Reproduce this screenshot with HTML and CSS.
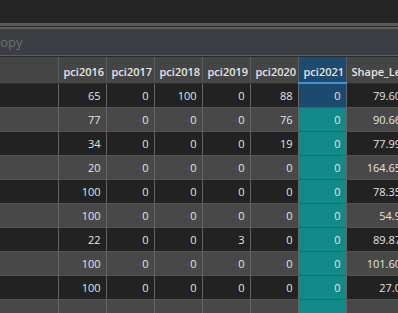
FILE: index.html
```html
<html>

<head>
    <link rel="stylesheet" href="styles.css">
</head>

<body>
    <div class="toolbar"></div>
    <div class="rule"></div>
    <div class="search-bar">
        <span class="placeholder">Copy</span>
    </div>

    <table class="attr-table">
        <colgroup>
            <col class="col-row">
            <col class="col-num"><col class="col-num"><col class="col-num">
            <col class="col-num"><col class="col-num"><col class="col-num">
            <col class="col-shape">
        </colgroup>
        <thead>
            <tr>
                <th></th>
                <th>pci2016</th>
                <th>pci2017</th>
                <th>pci2018</th>
                <th>pci2019</th>
                <th>pci2020</th>
                <th class="sel-head">pci2021</th>
                <th>Shape_Length</th>
            </tr>
        </thead>
        <tbody>
            <tr><td></td><td>65</td><td>0</td><td>100</td><td>0</td><td>88</td><td class="sel active">0</td><td>79.60</td></tr>
            <tr><td></td><td>77</td><td>0</td><td>0</td><td>0</td><td>76</td><td class="sel">0</td><td>90.66</td></tr>
            <tr><td></td><td>34</td><td>0</td><td>0</td><td>0</td><td>19</td><td class="sel">0</td><td>77.99</td></tr>
            <tr><td></td><td>20</td><td>0</td><td>0</td><td>0</td><td>0</td><td class="sel">0</td><td>164.65</td></tr>
            <tr><td></td><td>100</td><td>0</td><td>0</td><td>0</td><td>0</td><td class="sel">0</td><td>78.35</td></tr>
            <tr><td></td><td>100</td><td>0</td><td>0</td><td>0</td><td>0</td><td class="sel">0</td><td>54.9</td></tr>
            <tr><td></td><td>22</td><td>0</td><td>0</td><td>3</td><td>0</td><td class="sel">0</td><td>89.87</td></tr>
            <tr><td></td><td>100</td><td>0</td><td>0</td><td>0</td><td>0</td><td class="sel">0</td><td>101.60</td></tr>
            <tr><td></td><td>100</td><td>0</td><td>0</td><td>0</td><td>0</td><td class="sel">0</td><td>27.0</td></tr>
            <tr class="partial"><td></td><td></td><td></td><td></td><td></td><td></td><td class="sel"></td><td></td></tr>
        </tbody>
    </table>
</body>

</html>
```

FILE: styles.css
```css
body {
    margin: 0;
    padding: 0;
    width: 398px;
    height: 313px;
    overflow: hidden;
    background-color: #474747;
    font-family: 'Open Sans', 'Noto Sans', sans-serif;
    font-size: 11px;
    color: #e4e4e4;
}

.toolbar {
    height: 23px;
    background-color: #252525;
}

.rule {
    height: 3px;
    background-color: #595959;
    border-bottom: 1px solid #2d2d2d;
}

.search-bar {
    height: 26px;
    background-color: #3b3e42;
    border-top: 2px solid #5e5e5e;
    border-bottom: 1px solid #5a5a5a;
    box-shadow: 0 1px 0 #2c2c2c;
    margin-bottom: 1px;
    display: flex;
    align-items: center;
    overflow: hidden;
}

.placeholder {
    margin-left: -8px;
    font-size: 13px;
    color: #707070;
}

.attr-table {
    border-collapse: collapse;
    table-layout: fixed;
    width: 406px;
    font-family: 'Open Sans', 'Noto Sans', sans-serif;
    font-size: 11px;
    color: #e4e4e4;
}

.col-row {
    width: 58px;
}

.col-num {
    width: 48px;
}

.col-shape {
    width: 60px;
}

.attr-table th {
    height: 26px;
    padding: 3px 0 0 5px;
    background-color: #454545;
    border-left: 1px solid #5c5c5c;
    border-bottom: 1px solid #2e2e2e;
    text-align: left;
    font-weight: 600;
    color: #e6e6e6;
    white-space: nowrap;
    overflow: hidden;
}

.attr-table th:first-child {
    border-left: none;
}

.attr-table th.sel-head {
    background-color: #1d4a6d;
    border-bottom: 2px solid #3f93d8;
}

.attr-table td {
    height: 24px;
    padding: 1px 5px 0 0;
    border-left: 1px solid #666;
    border-bottom: 1px solid #555;
    text-align: right;
    white-space: nowrap;
    overflow: hidden;
    color: #e4e4e4;
}

.attr-table td:first-child {
    border-left: none;
}

.attr-table tbody tr:nth-child(odd) td {
    background-color: #222;
}

.attr-table tbody tr:nth-child(even) td {
    background-color: #484848;
}

.attr-table tbody tr td.sel {
    background-color: #138a8a;
    border-bottom-color: #0f7474;
}

.attr-table tbody tr td.active {
    background-color: #1c4a6e;
}
```
